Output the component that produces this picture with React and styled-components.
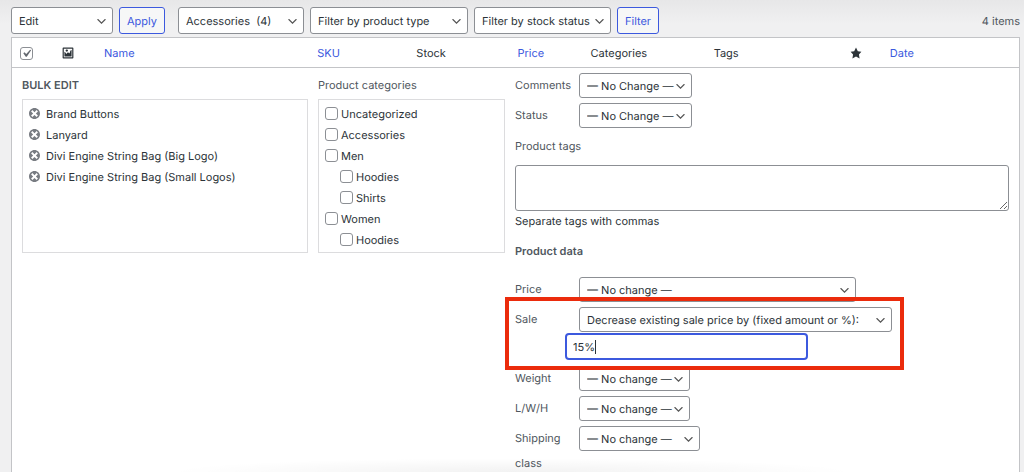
import React from 'react'
import styled, { createGlobalStyle } from 'styled-components'

const items = [
  'Brand Buttons',
  'Lanyard',
  'Divi Engine String Bag (Big Logo)',
  'Divi Engine String Bag (Small Logos)',
]

const categories = [
  { id: 'uncategorized', name: 'Uncategorized' },
  { id: 'accessories', name: 'Accessories' },
  { id: 'men', name: 'Men' },
  { id: 'men-hoodies', name: 'Hoodies', child: true },
  { id: 'men-shirts', name: 'Shirts', child: true },
  { id: 'women', name: 'Women' },
  { id: 'women-hoodies', name: 'Hoodies', child: true },
]

const Select = ({ id, label, option, width, tall }) => (
  <SelectWrap $width={width}>
    <StyleSelect id={id} aria-label={label} $tall={tall}>
      <option>{option}</option>
    </StyleSelect>
    <svg viewBox="0 0 20 20">
      <path d="M5 6l5 5 5-5 2 1-7 7-7-7 2-1z" />
    </svg>
  </SelectWrap>
)

const Field = ({ id, label, option, width }) => (
  <FieldRow>
    <FieldLabel htmlFor={id}>{label}</FieldLabel>
    <Select id={id} option={option} width={width} />
  </FieldRow>
)

const App = () => {
  return (
    <>
      <GlobalStyle />
      <Page>
        <Toolbar>
          <ToolGroup>
            <Select label="Bulk actions" option="Edit" width={102} tall />
            <Button type="button">Apply</Button>
          </ToolGroup>
          <ToolGroup>
            <Select label="Category" option={'Accessories\u00a0 (4)'} width={126} tall />
            <Select label="Product type" option="Filter by product type" width={158} tall />
            <Select label="Stock status" option="Filter by stock status" width={137} tall />
            <Button type="button">Filter</Button>
          </ToolGroup>
          <Count>4 items</Count>
        </Toolbar>

        <Table>
          <thead>
            <tr>
              <Th $width={42}>
                <CheckAll>
                  <Checkbox type="checkbox" defaultChecked aria-label="Select all" />
                  <svg viewBox="0 0 20 20">
                    <path d="M14.83 4.89l1.34.94-5.81 8.38H9.02L5.78 9.67l1.34-1.25 2.57 2.4z" />
                  </svg>
                </CheckAll>
              </Th>
              <Th $width={42}>
                <Icon viewBox="0 0 20 20">
                  <path d="M2.25 1h15.5c.69 0 1.25.56 1.25 1.25v15.5c0 .69-.56 1.25-1.25 1.25H2.25C1.56 19 1 18.44 1 17.75V2.25C1 1.56 1.56 1 2.25 1zM17 17V3H3v14h14zM10 6c0-1.1-.9-2-2-2s-2 .9-2 2 .9 2 2 2 2-.9 2-2zm3 5s0-6 3-6v10c0 .55-.45 1-1 1H5c-.55 0-1-.45-1-1V8c2 0 3 4 3 4s1-3 3-3 3 2 3 2z" />
                </Icon>
              </Th>
              <Th $width={213}><a href="#name">Name</a></Th>
              <Th $width={99}><a href="#sku">SKU</a></Th>
              <Th $width={101}>Stock</Th>
              <Th $width={73}><a href="#price">Price</a></Th>
              <Th $width={123}>Categories</Th>
              <Th $width={136}>Tags</Th>
              <Th $width={40}>
                <Icon viewBox="0 0 20 20">
                  <path d="M10 1l3 6 6 .75-4.12 4.62L16 19l-6-3-6 3 1.13-6.63L1 7.75 7 7z" />
                </Icon>
              </Th>
              <Th $width={137}><a href="#date">Date</a></Th>
            </tr>
          </thead>
          <tbody>
            <tr>
              <EditCell colSpan={10}>
                <EditGrid>
                  <Column>
                    <Legend $strong>BULK EDIT</Legend>
                    <Box>
                      {items.map((name) => (
                        <Item key={name}>
                          <RemoveButton type="button" aria-label="Remove">
                            <svg viewBox="2 2 16 16">
                              <path d="M10 2c4.42 0 8 3.58 8 8s-3.58 8-8 8-8-3.58-8-8 3.58-8 8-8zm5 11l-3-3 3-3-2-2-3 3-3-3-2 2 3 3-3 3 2 2 3-3 3 3 2-2z" />
                            </svg>
                          </RemoveButton>
                          {name}
                        </Item>
                      ))}
                    </Box>
                  </Column>

                  <Column>
                    <Legend>Product categories</Legend>
                    <Box>
                      {categories.map((cat) => (
                        <Category key={cat.id} $child={cat.child}>
                          <Checkbox type="checkbox" id={cat.id} />
                          <label htmlFor={cat.id}>{cat.name}</label>
                        </Category>
                      ))}
                    </Box>
                  </Column>

                  <Fields>
                    <Field id="comments" label="Comments" option="— No Change —" width={113} />
                    <Field id="status" label="Status" option="— No Change —" width={113} />
                    <TagsLabel htmlFor="tags">Product tags</TagsLabel>
                    <TextArea id="tags" />
                    <Help>Separate tags with commas</Help>
                    <DataTitle>Product data</DataTitle>
                    <Field id="price" label="Price" option="— No change —" width={277} />
                    <SaleGroup>
                      <Field
                        id="sale"
                        label="Sale"
                        option="Decrease existing sale price by (fixed amount or %):"
                        width={313}
                      />
                      <SaleInput type="text" aria-label="Sale amount" defaultValue="15%" />
                      <Highlight />
                    </SaleGroup>
                    <Field id="weight" label="Weight" option="— No change —" width={111} />
                    <Field id="lwh" label="L/W/H" option="— No change —" width={111} />
                    <Field id="shipping" label="Shipping class" option="— No change —" width={121} />
                  </Fields>
                </EditGrid>
              </EditCell>
            </tr>
          </tbody>
        </Table>
        <BottomShade />
      </Page>
    </>
  )
}

const GlobalStyle = createGlobalStyle`
  * {
    box-sizing: border-box;
  }
  body {
    margin: 0;
    background: #f0f0f1;
    color: #2c3338;
    font-family: Inter, "Liberation Sans", sans-serif;
    font-size: 11px;
    line-height: 20px;
    text-rendering: geometricPrecision;
  }
  button,
  input,
  select,
  textarea {
    margin: 0;
    font: inherit;
    text-rendering: inherit;
  }
  a {
    color: #3c59de;
    text-decoration: none;
  }
`

const Page = styled.div`
  position: relative;
  height: 100vh;
  overflow: hidden;
  padding: 7px 4px 0 11px;
  background: linear-gradient(#e7e7e8, #f0f0f1 24px);
`

const Toolbar = styled.div`
  display: flex;
  align-items: center;
  gap: 13px;
  margin-bottom: 3px;
`

const ToolGroup = styled.div`
  display: flex;
  gap: 6px;
`

const Count = styled.span`
  margin-left: auto;
  color: #50575e;
`

const SelectWrap = styled.div`
  position: relative;
  width: ${(props) => props.$width}px;

  svg {
    position: absolute;
    top: 50%;
    right: 5px;
    width: 13px;
    height: 13px;
    margin-top: -6px;
    fill: #555;
    pointer-events: none;
  }
`

const StyleSelect = styled.select`
  display: block;
  appearance: none;
  width: 100%;
  height: ${(props) => (props.$tall ? 27 : 25)}px;
  padding: 0 12px 0 7px;
  border: 1px solid #8c8f94;
  border-radius: 3px;
  background: #fff;
  color: #2c3338;
`

const Button = styled.button`
  height: 27px;
  padding: 0 7px;
  border: 1px solid #3c59de;
  border-radius: 3px;
  background: #f6f7f7;
  color: #3c59de;
`

const Table = styled.table`
  width: 100%;
  min-height: 100vh;
  table-layout: fixed;
  border: 1px solid #c3c4c7;
  border-spacing: 0;
  background: #fff;
`

const Th = styled.th`
  width: ${(props) => props.$width}px;
  height: 30px;
  padding: 0 0 0 8px;
  border-bottom: 1px solid #c3c4c7;
  font-weight: 400;
  text-align: left;
`

const Icon = styled.svg`
  display: block;
  width: 12px;
  height: 12px;
  fill: #2c3338;
`

const Checkbox = styled.input`
  appearance: none;
  flex: none;
  width: 13px;
  height: 13px;
  border: 1px solid #8c8f94;
  border-radius: 3px;
  background: #fff;
`

const CheckAll = styled.div`
  position: relative;
  display: flex;
  width: 13px;
  margin-top: 2px;

  svg {
    position: absolute;
    inset: -1px;
    fill: #646970;
  }
`

const EditCell = styled.td`
  padding: 0 10px;
  vertical-align: top;
`

const EditGrid = styled.div`
  display: grid;
  grid-template-columns: 286fr 187fr 494fr;
  gap: 10px;
`

const Column = styled.div`
  padding-top: 7px;
`

const Legend = styled.div`
  margin-bottom: 4px;
  color: #50575e;
  font-weight: ${(props) => (props.$strong ? 600 : 400)};
`

const Box = styled.ul`
  height: 154px;
  margin: 0;
  padding: 3px 6px;
  overflow: hidden;
  border: 1px solid #dcdcde;
  list-style: none;
`

const Item = styled.li`
  display: flex;
  align-items: center;
  gap: 6px;
  height: 21px;
`

const RemoveButton = styled.button`
  display: flex;
  padding: 0;
  border: 0;
  background: none;

  svg {
    width: 11px;
    height: 11px;
    fill: #787c82;
  }
`

const Category = styled.li`
  display: flex;
  align-items: center;
  gap: 3px;
  height: 21px;
  padding-left: ${(props) => (props.$child ? 15 : 0)}px;
`

const Fields = styled.div`
  display: flex;
  flex-direction: column;
  gap: 5px;
  padding-top: 5px;
`

const FieldRow = styled.div`
  display: flex;
  align-items: flex-start;
`

const FieldLabel = styled.label`
  width: 64px;
  color: #50575e;
  line-height: 25px;
`

const TagsLabel = styled.label`
  margin: 3px 0 4px;
  color: #50575e;
`

const TextArea = styled.textarea`
  display: block;
  width: 100%;
  height: 46px;
  border: 1px solid #8c8f94;
  border-radius: 3px;
  background: #fff;
`

const Help = styled.div`
  margin-top: -5px;
`

const DataTitle = styled.div`
  margin: 5px 0 11px;
  color: #50575e;
  font-weight: 600;
`

const SaleGroup = styled.div`
  position: relative;
`

const SaleInput = styled.input`
  display: block;
  width: 243px;
  height: 27px;
  margin: 1px 0 1px 50px;
  padding: 0 6px;
  border: 2px solid #3c59de;
  border-radius: 4px;
  background: linear-gradient(#2c3338, #2c3338) 28px 50% / 1px 14px no-repeat #fff;
  color: #2c3338;
`

/* red frame drawn over the sale fields */
const Highlight = styled.div`
  position: absolute;
  z-index: 1;
  top: -10px;
  left: -10px;
  width: 399px;
  height: 73px;
  border: 4px solid #eb2b0c;
  pointer-events: none;
`

const BottomShade = styled.div`
  position: absolute;
  bottom: 0;
  left: 16%;
  right: 16%;
  height: 14px;
  background: radial-gradient(ellipse at bottom, rgba(0, 0, 0, 0.05), transparent 70%);
  pointer-events: none;
`

export default App
